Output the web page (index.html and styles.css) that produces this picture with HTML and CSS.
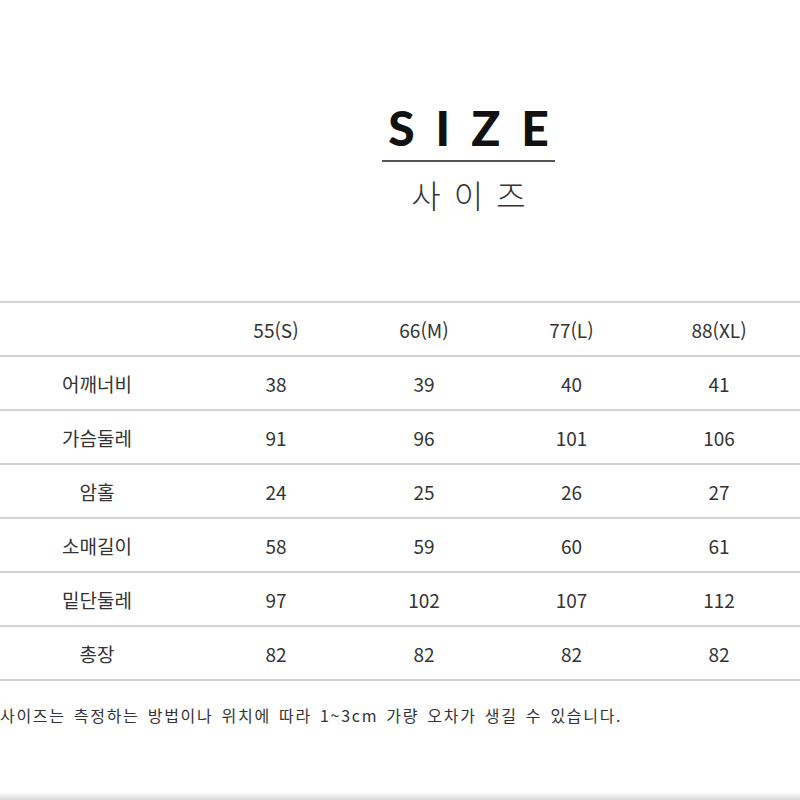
FILE: index.html
```html
<!DOCTYPE html>
<html lang="ko">
<head>
<meta charset="utf-8">
<link rel="stylesheet" href="styles.css">
</head>
<body>
<div class="page">
  <header class="title">
    <h1 class="title-en">SIZE</h1>
    <div class="title-rule"></div>
    <p class="title-ko">사이즈</p>
  </header>
  <div class="table">
    <div class="row head">
      <div class="cell label"></div>
      <div class="cell">55(S)</div>
      <div class="cell">66(M)</div>
      <div class="cell">77(L)</div>
      <div class="cell">88(XL)</div>
    </div>
    <div class="row">
      <div class="cell label">어깨너비</div>
      <div class="cell">38</div><div class="cell">39</div><div class="cell">40</div><div class="cell">41</div>
    </div>
    <div class="row">
      <div class="cell label">가슴둘레</div>
      <div class="cell">91</div><div class="cell">96</div><div class="cell">101</div><div class="cell">106</div>
    </div>
    <div class="row">
      <div class="cell label">암홀</div>
      <div class="cell">24</div><div class="cell">25</div><div class="cell">26</div><div class="cell">27</div>
    </div>
    <div class="row">
      <div class="cell label">소매길이</div>
      <div class="cell">58</div><div class="cell">59</div><div class="cell">60</div><div class="cell">61</div>
    </div>
    <div class="row">
      <div class="cell label">밑단둘레</div>
      <div class="cell">97</div><div class="cell">102</div><div class="cell">107</div><div class="cell">112</div>
    </div>
    <div class="row">
      <div class="cell label">총장</div>
      <div class="cell">82</div><div class="cell">82</div><div class="cell">82</div><div class="cell">82</div>
    </div>
  </div>
  <p class="note">사이즈는 측정하는 방법이나 위치에 따라 1~3cm 가량 오차가 생길 수 있습니다.</p>
  <div class="bottom-edge"></div>
</div>
</body>
</html>
```

FILE: styles.css
```css
html, body {
  margin: 0;
  padding: 0;
  background: #ffffff;
}
.page {
  width: 800px;
  height: 800px;
  position: relative;
  overflow: hidden;
  font-family: "Noto Sans CJK KR", "Noto Sans", sans-serif;
  color: #333333;
}
.title {
  margin-left: 382px;
  width: 173px;
  padding-top: 100px;
  display: flex;
  flex-direction: column;
  align-items: center;
}
.title-en {
  margin: 0;
  font-family: "Lato", "Noto Sans", sans-serif;
  font-weight: 900;
  font-size: 48px;
  line-height: 56px;
  color: #111111;
  letter-spacing: 21px;
  padding-left: 21px;
}
.title-rule {
  width: 173px;
  height: 2px;
  background: #555555;
  margin-top: 4px;
}
.title-ko {
  margin: 13px 0 0 0;
  font-size: 32px;
  line-height: 38px;
  font-weight: 300;
  letter-spacing: 13px;
  padding-left: 13px;
  color: #333333;
}
.table {
  margin-top: 88px;
  width: 800px;
  border-top: 2px solid #d2d2d2;
}
.row {
  display: grid;
  grid-template-columns: 202px 148px 148px 147px 148px;
  height: 52px;
  border-bottom: 2px solid #d2d2d2;
  align-items: center;
}
.cell {
  text-align: center;
  font-size: 19px;
  color: #333333;
}
.cell.label {
  padding-right: 8px;
}
.note {
  margin: 22px 0 0 0;
  font-size: 16px;
  letter-spacing: 1.7px;
  word-spacing: 2px;
  color: #333333;
}
.bottom-edge {
  position: absolute;
  left: 0;
  right: 0;
  bottom: 0;
  height: 8px;
  background: linear-gradient(#ffffff, #d8d8d8);
}
```
